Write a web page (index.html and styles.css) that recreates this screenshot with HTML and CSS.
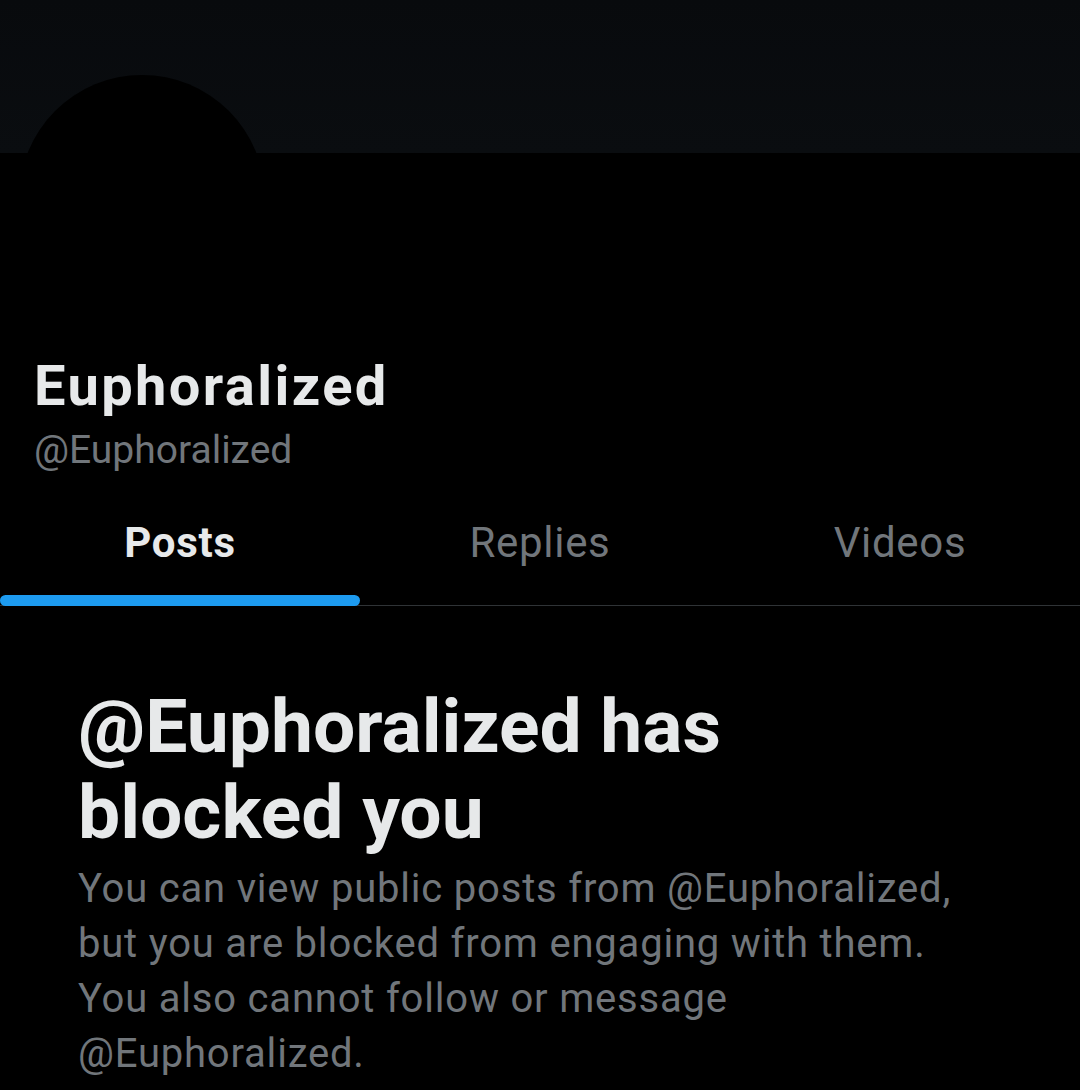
FILE: index.html
```html
<!DOCTYPE html>
<html lang="en">

<head>
    <meta charset="UTF-8">
    <meta name="viewport" content="width=device-width, initial-scale=1.0">
    <title>Euphoralized</title>
    <link rel="stylesheet" href="styles.css">
</head>

<body>
    <!-- Banner with the avatar overlapping it -->
    <header class="banner">
        <div class="avatar"></div>
    </header>

    <!-- Name and handle -->
    <section class="profile">
        <h1 class="name">Euphoralized</h1>
        <div class="handle">@Euphoralized</div>
    </section>

    <!-- Tabs -->
    <nav class="tabs">
        <a href="#" class="tab active"><span>Posts</span></a>
        <a href="#" class="tab"><span>Replies</span></a>
        <a href="#" class="tab"><span>Videos</span></a>
    </nav>

    <!-- Blocked notice -->
    <main class="notice">
        <h2>@Euphoralized has blocked you</h2>
        <p>You can view public posts from @Euphoralized, but you are blocked from engaging with them. You also cannot follow or message @Euphoralized.</p>
    </main>
</body>

</html>
```

FILE: styles.css
```css
body {
    margin: 0;
    background-color: #000000;
    color: #e7e9ea;
    font-family: Roboto, "Noto Sans", sans-serif;
    overflow: hidden;
}

.banner {
    position: relative;
    height: 153px;
    background: linear-gradient(180deg, #080a0d, #0a0d10); /* almost black header image */
}

.avatar {
    position: absolute;
    left: 19px;
    top: 75px;
    width: 246px;
    height: 246px;
    border-radius: 50%;
    background-color: #000000;
}

.profile {
    padding: 202px 34px 0;
}

.name {
    margin: 0;
    font-size: 56px;
    font-weight: 700;
    line-height: 62px;
    letter-spacing: 2.4px;
    color: #e7e9ea;
}

.handle {
    margin-top: 7px;
    font-size: 39px;
    line-height: 52px;
    color: #71767b;
}

.tabs {
    display: flex;
    margin-top: 27px;
    border-bottom: 1px solid #2f3336;
}

.tab {
    flex: 1;
    display: flex;
    justify-content: center;
    text-decoration: none;
    color: #71767b;
    font-size: 42px;
    line-height: 52px;
    letter-spacing: 0.7px;
}

.tab span {
    padding: 14px 0 36px;
}

.tab.active {
    color: #e7e9ea;
    font-weight: 700;
    position: relative;
}

.tab.active::after {
    content: "";
    position: absolute;
    left: 0;
    right: 0;
    bottom: -1px;
    height: 11px;
    border-radius: 6px;
    background-color: #1d9bf0;
}

.notice {
    padding: 77px 78px 0;
}

.notice h2 {
    margin: 0;
    max-width: 800px;
    font-size: 75px;
    font-weight: 700;
    line-height: 86px;
    color: #e7e9ea;
}

.notice p {
    margin: 6px 0 0;
    max-width: 910px;
    font-size: 40px;
    line-height: 55px;
    letter-spacing: 0.8px;
    color: #71767b;
}
```
